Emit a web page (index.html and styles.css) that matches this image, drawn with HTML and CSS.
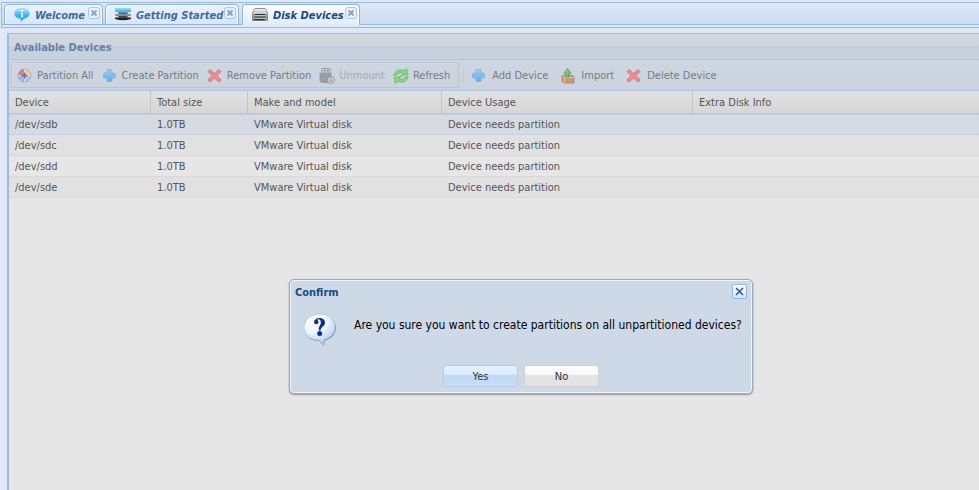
FILE: index.html
```
<!DOCTYPE html>
<html lang="en">
<head>
<meta charset="utf-8">
<title>Disk Devices</title>
<link rel="stylesheet" href="styles.css">
</head>
<body>
<svg class="defs" aria-hidden="true">
  <defs>
    <linearGradient id="blue" x1="0" y1="0" x2="0" y2="1"><stop offset="0" stop-color="#9dccee"/><stop offset="1" stop-color="#62ace6"/></linearGradient>
    <linearGradient id="info" x1="0" y1="0" x2="0" y2="1"><stop offset="0" stop-color="#bdeaff"/><stop offset=".5" stop-color="#36b7f5"/><stop offset="1" stop-color="#0c9af0"/></linearGradient>
    <linearGradient id="disk" x1="0" y1="0" x2="0" y2="1"><stop offset="0" stop-color="#f2f2f2"/><stop offset="1" stop-color="#777"/></linearGradient>
    <radialGradient id="bubble" cx=".35" cy=".2" r=".9"><stop offset="0" stop-color="#fff"/><stop offset=".45" stop-color="#eef6ff"/><stop offset="1" stop-color="#9cc6f4"/></radialGradient>
    <symbol id="plus" viewBox="0 0 16 16"><path d="M5 2.500Q5 1.500 6 1.500H9Q10 1.500 10 2.500V5H12.500Q13.500 5 13.500 6V9Q13.500 10 12.500 10H10V12.500Q10 13.500 9 13.500H6Q5 13.500 5 12.500V10H2.500Q1.500 10 1.500 9V6Q1.500 5 2.500 5H5Z" fill="url(#blue)" stroke="#7fb5e2" stroke-width=".8"/></symbol>
    <symbol id="cross" viewBox="0 0 16 16"><path d="M3 1.500 7.500 5.500 12 1.500 14 3.500 10 7.500 14 12 12 14 7.500 10 3 14 1 12 5 7.500 1 3.500Z" fill="#e8908f" stroke="#d07070" stroke-width=".9"/></symbol>
    <symbol id="x" viewBox="0 0 12 12"><rect x=".5" y=".5" width="11" height="11" rx="2.500" fill="#e9f1fc" stroke="#a9c5ec"/><path d="m3.500 3.500 5 5m0-5-5 5" stroke="#86a3d0" stroke-width="2"/></symbol>
  </defs>
</svg>
<main class="app">
  <nav class="tabs">
    <div class="tab">
      <svg class="icon" viewBox="0 0 16 16"><path d="M8 1.500c4.500 0 7.500 2 7.500 5S12.500 11.500 10 11.700L7 14.500l-.500-2.700C3 11.500 .500 9.600 .500 6.500S3.500 1.500 8 1.500Z" fill="url(#info)" stroke="#8ccbed" stroke-width=".7"/><path d="M8 3v1.800M8 6v4.500" stroke="#fff" stroke-width="1.800"/></svg>
      <a href="#welcome">Welcome</a>
      <button class="tab-close" aria-label="Close Welcome"><svg><use href="#x"/></svg></button>
    </div>
    <div class="tab started">
      <svg class="icon" viewBox="0 0 16 16"><path d="M0 1.500h16v3L12.500 6h-9L0 4.500Z" fill="#4db9e5"/><path d="M0 1.500h16v1.200H0Z" fill="#8bd5f1"/><path d="M3.500 5.500h9v1.500h-9Z" fill="#356f88"/><path d="M0 7h16v1.500L12.500 9.500h-9L0 8.500Z" fill="#8d8d8d"/><path d="M0 10.500h16V12q-8 2.500-16 0Z" fill="#222"/><path d="M3.500 9h9v2h-9Z" fill="#444"/></svg>
      <a href="#started">Getting Started</a>
      <button class="tab-close" aria-label="Close Getting Started"><svg><use href="#x"/></svg></button>
    </div>
    <div class="tab active">
      <svg class="icon" viewBox="0 0 16 16"><path d="M3 1.500h10Q15.500 4 15.500 7v6.500H.500V7Q.500 4 3 1.500Z" fill="url(#disk)" stroke="#777" stroke-width=".8"/><path d="M2.500 7.500h11M2.500 10h11M2.500 12.500h10" stroke="#333" stroke-width="1.300"/><path d="M2 6.200h12M2.500 8.800h11M2.500 11.300h11" stroke="#eee" stroke-width=".8"/><path d="M13.500 12h2.500v2h-2.500Z" fill="#62d21f"/></svg>
      <a href="#disks">Disk Devices</a>
      <button class="tab-close" aria-label="Close Disk Devices"><svg><use href="#x"/></svg></button>
    </div>
  </nav>
  <section class="panel">
    <h1>Available Devices</h1>
    <div class="toolbar">
      <div class="group">
        <button><svg class="icon" viewBox="0 0 16 16"><circle cx="7.500" cy="7.500" r="6.500" fill="#bdbbe8"/><path d="M7.500 7.500V1A6.500 6.500 0 0 0 1 7.500Z" fill="#df8076"/><path d="M8 7V1a6.500 6.500 0 0 1 6 6Z" fill="#efd37c"/><path d="M7.500 8v6A6.500 6.500 0 0 1 1 8Z" fill="#a9b4e6"/><path d="M7.500 1v13M1 7.500h13" stroke="#e8ecf3" stroke-width=".8"/><path d="M4.500 7.500h6M7.500 4.500v6" stroke="#5a72b4" stroke-width="1.300"/><circle cx="7.500" cy="7.500" r="6.500" fill="none" stroke="#979fbe" stroke-width=".7"/></svg>Partition All</button>
        <button><svg class="icon"><use href="#plus"/></svg>Create Partition</button>
        <button><svg class="icon"><use href="#cross"/></svg>Remove Partition</button>
        <button disabled><svg class="icon" viewBox="0 0 16 16"><path d="M3 .500h8V5H3Z" fill="#c9cdd3" stroke="#989ca3"/><path d="M5 2h1.500v1.500H5ZM8 2h1.500v1.500H8Z" fill="#858a90"/><path d="M.500 5h12v10H2.500L.500 13Z" fill="#999da3"/><circle cx="12" cy="12" r="3.500" fill="#d4d8df" stroke="#8f949b"/><path d="M12 9.500v4m-1.700-1.700L12 13.500l1.700-1.700" fill="none" stroke="#8f949b"/></svg>Unmount</button>
        <button><svg class="icon" viewBox="0 0 16 16"><path d="M.800 7.500C1.500 3 6.500 .500 11 2.800L13.500 .500 15 6.500 8 7.500l2.200-2.300C8 4.200 5.500 4.500 4 7Z" fill="#86d684" stroke="#62b963" stroke-width=".8"/><path d="M15.200 8.500C14.500 13 9.500 15.500 5 13.200L2.500 15.500 1 9.500 8 8.500 5.800 10.800C8 11.800 10.500 11.500 12 9Z" fill="#86d684" stroke="#62b963" stroke-width=".8"/></svg>Refresh</button>
      </div>
      <div class="actions">
        <button><svg class="icon"><use href="#plus"/></svg>Add Device</button>
        <button><svg class="icon" viewBox="0 0 16 16"><path d="M2 7h9.500L14 8.500V15H4L2 13Z" fill="#c99a79" stroke="#a9815f" stroke-width=".8"/><path d="m2 7 2.500 2.500H14M4.500 9.500V15" fill="none" stroke="#e3bea2"/><path d="M6.500 9V5H4L7.500 .700 11 5H8.500v4Z" fill="#86ce83" stroke="#4f9f54" stroke-width=".9"/></svg>Import</button>
        <button><svg class="icon"><use href="#cross"/></svg>Delete Device</button>
      </div>
    </div>
    <table>
      <colgroup><col class="c-device"><col class="c-size"><col class="c-model"><col class="c-usage"><col></colgroup>
      <thead><tr><th>Device</th><th>Total size</th><th>Make and model</th><th>Device Usage</th><th>Extra Disk Info</th></tr></thead>
      <tbody>
        <tr class="selected"><td>/dev/sdb</td><td>1.0TB</td><td>VMware Virtual disk</td><td>Device needs partition</td><td></td></tr>
        <tr class="alt"><td>/dev/sdc</td><td>1.0TB</td><td>VMware Virtual disk</td><td>Device needs partition</td><td></td></tr>
        <tr><td>/dev/sdd</td><td>1.0TB</td><td>VMware Virtual disk</td><td>Device needs partition</td><td></td></tr>
        <tr class="alt"><td>/dev/sde</td><td>1.0TB</td><td>VMware Virtual disk</td><td>Device needs partition</td><td></td></tr>
      </tbody>
    </table>
  </section>
</main>
<section class="confirm" role="dialog" aria-labelledby="confirm-title">
  <header>
    <h2 id="confirm-title">Confirm</h2>
    <button class="close" aria-label="Close"><svg viewBox="0 0 9 9"><path d="m1 1 7 7m0-7-7 7" stroke="#2c4f9f" stroke-width="1.500"/></svg></button>
  </header>
  <div class="message">
    <svg class="question" viewBox="0 0 34 34" aria-hidden="true"><path d="M17 2C26 2 33 7 33 15c0 6-4 10.500-11 12.500L21 33l-5-5C7 28 2 22.500 2 15.500S8 2 17 2Z" fill="#8d99a8"/><path d="M16.500 1C25.500 1 32 6.500 32 14c0 6-4 10.500-11 12.500L20.500 31.500 16 27C7 27 1 21.500 1 14.500S7.500 1 16.500 1Z" fill="url(#bubble)" stroke="#b3c3d5" stroke-width=".8"/><path d="M11.500 9C11.500 3.500 22 3.500 22 9.500 22 13.500 17.800 13.500 17.500 17.500H16C15 13.500 18 12.500 17.800 9 17.600 5.500 14.500 5.500 14 7.500Z" fill="#08308f"/><circle cx="13.300" cy="9" r="2.200" fill="#08308f"/><circle cx="16.700" cy="20.500" r="2.500" fill="#08308f"/></svg>
    <p>Are you sure you want to create partitions on all unpartitioned devices?</p>
  </div>
  <footer><button class="primary">Yes</button><button>No</button></footer>
</section>
</body>
</html>
```
FILE: styles.css
```
* { box-sizing: border-box; }
html, body { height: 100%; margin: 0; }
body {
  position: relative;
  overflow: hidden;
  background: #dfe8f6;
  color: #555;
  font: 11px/14px "DejaVu Sans Condensed", "DejaVu Sans", sans-serif;
}
h1, h2, p { margin: 0; }
button { margin: 0; padding: 0; border: 0; background: none; color: inherit; font: inherit; }
svg { display: block; }
.defs { position: absolute; width: 0; height: 0; }
.icon { width: 16px; height: 16px; flex: none; }

.app {
  display: flex;
  flex-direction: column;
  height: 100%;
  margin-left: 1px;
  padding-top: 2px;
}
.tabs {
  display: flex;
  gap: 2px;
  height: 26px;
  flex: none;
  padding: 1px 2px 0;
  border: solid #99bbe8;
  border-width: 1px 0 1px 1px;
  background: linear-gradient(#dde8f7, #cbdbef 21px, #99bbe8 21px, #99bbe8 22px, #dfe8f6 22px);
}
.tab {
  display: flex;
  align-items: center;
  height: 21px;
  width: 99px;
  padding-left: 9px;
  border: 1px solid #8db2e3;
  border-radius: 4px 4px 0 0;
  background: linear-gradient(#e8f2ff, #d8e6fa);
  box-shadow: inset 1px 1px #fff, inset -1px 0 #fff;
}
.tab.started { width: 134px; }
.tab.active { width: 118px; margin-left: 1px; border-bottom: 0; background: linear-gradient(#fff, #deecfd); }
.tab a {
  flex: 1;
  padding: 2px 0 0 5px;
  color: #416aa3;
  font-style: italic;
  font-weight: bold;
  text-decoration: none;
  white-space: nowrap;
}
.tab.active a { color: #15498b; }
.tab-close { align-self: flex-start; margin: 2px 2px 0 0; }
.tab-close svg { width: 12px; height: 12px; }

.panel {
  flex: 1;
  margin-top: 5px;
  margin-left: 6px;
  border: solid #99bbe8;
  border-width: 1px 0 0 2px;
  background: #e6e6e6;
}
.panel h1 {
  height: 26px;
  padding: 7px 5px 0;
  border-bottom: 1px solid #adc3df;
  background: linear-gradient(#d3d9e1, #ced5dd 12px, #c3cfdd 12px, #c8d2df);
  color: #6581a9;
  font-size: 11px;
}
.toolbar {
  display: flex;
  gap: 4px;
  height: 31px;
  padding: 2px;
  border-bottom: 1px solid #adc3df;
  background: linear-gradient(#ced6e1, #cbd3df);
  color: #777b82;
}
.toolbar button { display: flex; align-items: center; gap: 4px; white-space: nowrap; }
.toolbar button:disabled { color: #a4a9b2; }
.group, .actions { display: flex; }
.group {
  gap: 8px;
  padding: 1px 8px 0 5px;
  border: 1px solid #bac4d2;
  border-radius: 2px;
  box-shadow: inset 1px 1px #d6dde6;
}
.actions {
  gap: 12px;
  padding: 1px 0 0 8px;
  background: linear-gradient(#b1cdf0, #b1cdf0) 0 7px / 1px 13px no-repeat;
}
.toolbar .actions button { gap: 5px; }

table { width: 100%; border-collapse: separate; border-spacing: 0; table-layout: fixed; }
.c-device { width: 142px; }
.c-size { width: 97px; }
.c-model { width: 194px; }
.c-usage { width: 251px; }
th, td { padding: 1px 6px 0; text-align: left; font-weight: normal; white-space: nowrap; }
th {
  height: 23px;
  border-right: 1px solid #c4c4c4;
  border-bottom: 1px solid #c4c4c4;
  background: linear-gradient(#e1e1e1, #d6d6d6);
}
th:last-child { border-right: 0; }
td { height: 21px; border-bottom: 1px solid #d9d9d9; }
.alt td { background: #e1e1e1; }
.selected td {
  padding-top: 0;
  border-top: 1px dotted #b4c5df;
  border-bottom: 1px dotted #b4c5df;
  background: #d6dbe3;
}

.confirm {
  position: absolute;
  left: 289px;
  top: 279px;
  width: 464px;
  padding: 4px 5px 6px;
  border: 1px solid #97a8c2;
  border-radius: 5px;
  background: #ced9e7;
  box-shadow: inset 0 0 0 1px #eef4fc, 0 1px 2px #999;
  color: #000;
}
.confirm header { display: flex; justify-content: space-between; height: 26px; }
.confirm h2 { padding-top: 2px; color: #15498b; font-size: 11px; line-height: 14px; }
.close {
  display: grid;
  place-items: center;
  width: 15px;
  height: 15px;
  border: 1px solid #8bb8f0;
  border-radius: 2px;
  background: linear-gradient(#fff, #d2e6ff);
}
.close svg { width: 9px; height: 9px; }
.message { display: flex; gap: 17px; height: 55px; padding: 3px 8px; }
.question { width: 34px; height: 34px; flex: none; }
.message p { padding-top: 4px; font-size: 12px; line-height: 16px; white-space: nowrap; }
.confirm footer { display: flex; justify-content: center; gap: 6px; }
.confirm footer button {
  width: 75px;
  height: 22px;
  padding-top: 2px;
  border: 1px solid #d1d1d1;
  border-radius: 3px;
  background: linear-gradient(#fff, #f7f7f7 9px, #e4e4e4 9px, #e2e2e2);
  color: #333;
}
.confirm footer .primary { border-color: #b0ccf2; background: linear-gradient(#e4f2ff, #d8ebfd 9px, #c0d8f2 9px, #c8dcf6); }
```
